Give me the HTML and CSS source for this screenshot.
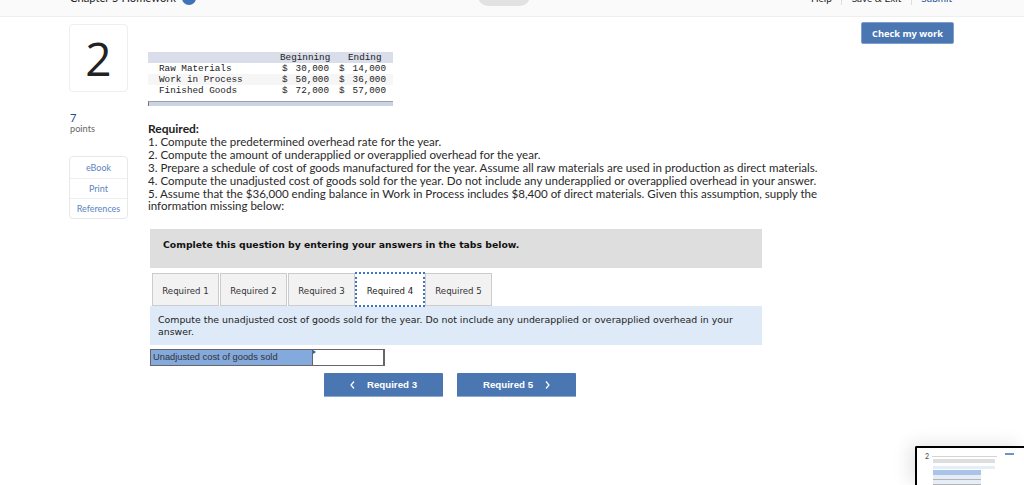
FILE: index.html
```html
<!DOCTYPE html>
<html lang="en">
<head>
<meta charset="utf-8">
<title>Chapter 5 Homework</title>
<link rel="stylesheet" href="styles.css">
</head>
<body>
<header class="topbar">
  <div class="title"><span class="title-text">Chapter 5 Homework</span><span class="info-dot"></span></div>
  <div class="pill"></div>
  <nav class="top-links">
    <span class="top-link">Help</span>
    <span class="top-link">Save &amp; Exit</span>
    <span class="top-link submit">Submit</span>
  </nav>
</header>
<div class="page">
  <aside class="side">
    <div class="qnum">2</div>
    <div class="pts-val">7</div>
    <div class="pts-label">points</div>
    <div class="res">
      <div class="res-item">eBook</div>
      <div class="res-item">Print</div>
      <div class="res-item">References</div>
    </div>
  </aside>
  <main class="main">
    <div class="ledger">
      <div class="lrow lhead"><span class="lname"></span><span class="lbeg">Beginning</span><span class="lend">Ending</span></div>
      <div class="lrow lvals"><span class="lname">Raw Materials</span><span class="lbeg">$ 30,000</span><span class="lend">$ 14,000</span></div>
      <div class="lrow lvals lalt"><span class="lname">Work in Process</span><span class="lbeg">$ 50,000</span><span class="lend">$ 36,000</span></div>
      <div class="lrow lvals"><span class="lname">Finished Goods</span><span class="lbeg">$ 72,000</span><span class="lend">$ 57,000</span></div>
      <div class="lfoot"></div>
    </div>
    <div class="problem">
      <strong>Required:</strong><br>
      1. Compute the predetermined overhead rate for the year.<br>
      2. Compute the amount of underapplied or overapplied overhead for the year.<br>
      3. Prepare a schedule of cost of goods manufactured for the year. Assume all raw materials are used in production as direct materials.<br>
      4. Compute the unadjusted cost of goods sold for the year. Do not include any underapplied or overapplied overhead in your answer.<br>
      5. Assume that the $36,000 ending balance in Work in Process includes $8,400 of direct materials. Given this assumption, supply the information missing below:
    </div>
    <div class="notice">Complete this question by entering your answers in the tabs below.</div>
    <div class="tabs">
      <div class="tab">Required 1</div>
      <div class="tab">Required 2</div>
      <div class="tab">Required 3</div>
      <div class="tab active">Required 4</div>
      <div class="tab">Required 5</div>
    </div>
    <div class="desc">Compute the unadjusted cost of goods sold for the year. Do not include any underapplied or overapplied overhead in your answer.</div>
    <div class="answer">
      <div class="answer-label">Unadjusted cost of goods sold</div>
      <div class="answer-input"><span class="marker"></span></div>
    </div>
    <div class="nav">
      <div class="btn"><svg class="chev" viewBox="0 0 5 8" width="5" height="8"><polyline points="4,0.5 1,4 4,7.5"/></svg>Required 3</div>
      <div class="btn">Required 5<svg class="chev" viewBox="0 0 5 8" width="5" height="8"><polyline points="1,0.5 4,4 1,7.5"/></svg></div>
    </div>
  </main>
  <div class="actions"><div class="check">Check my work</div></div>
</div>
<div class="thumb">
  <div class="t-top"><span class="t-two">2</span><span class="t-line"></span><span class="t-btn"></span></div>
  <div class="t-gray"></div>
  <div class="t-blue"></div>
  <div class="t-table"><div class="t-thead"></div><div class="t-row"></div><div class="t-row"></div></div>
</div>
</body>
</html>
```
FILE: styles.css
```css
* { box-sizing: border-box; }
html, body { margin: 0; padding: 0; height: 485px; overflow: hidden; background: #fff; }
body { font-family: "Lato", "Open Sans", sans-serif; color: #333; position: relative; }

.topbar { height: 17px; background: #fafafa; border-bottom: 1px solid #efefef; overflow: hidden; display: flex; align-items: flex-end; padding: 0 72px 0 70px; }
.title { width: 408px; display: flex; align-items: center; gap: 6px; margin-bottom: 11px; font-size: 11.2px; line-height: 14px; color: #222; }
.info-dot { width: 14px; height: 14px; border-radius: 50%; background: #3f72b6; display: block; }
.pill { width: 52px; height: 20px; background: #e2e2e2; border-radius: 10px; margin-bottom: 10px; }
.top-links { margin-left: auto; display: flex; margin-bottom: 11px; font-size: 10px; line-height: 14px; color: #222; }
.top-link { padding: 0 9.5px; border-left: 1px solid #ddd; }
.top-link:first-child { border-left: 0; }
.submit { color: #1d4f91; padding-right: 0; }

.page { display: grid; grid-template-columns: 59px 693px 93px; column-gap: 20px; padding: 5px 0 0 69px; }

.side { display: flex; flex-direction: column; padding-top: 2px; }
.qnum { height: 68px; border: 1px solid #efefef; border-radius: 4px; display: flex; align-items: center; justify-content: center; font-family: "Open Sans", sans-serif; font-size: 46px; color: #222; line-height: 1; }
.pts-val { margin: 19px 0 0 1px; font-size: 11px; line-height: 13px; color: #1d4f91; }
.pts-label { margin-left: 1px; font-size: 9.2px; line-height: 10px; color: #666; }
.res { margin-top: 22px; border: 1px solid #e8e8e8; border-radius: 4px; height: 63px; display: flex; flex-direction: column; font-size: 9px; color: #5b85bd; }
.res-item { flex: 1; padding-top: 1px; display: flex; align-items: center; justify-content: center; border-top: 1px solid #eee; }
.res-item:first-child { border-top: 0; flex: 1.1; }

.main { padding-top: 30px; }
.ledger { width: 245px; font-family: "Liberation Mono", monospace; font-size: 9.3px; line-height: 11px; color: #222; }
.lrow { display: flex; height: 11px; white-space: pre; }
.lhead { background: #d9deea; }
.lalt { background: #f6f6f6; }
.lname { width: 132px; padding-left: 11px; }
.lbeg { width: 68px; }
.lend { width: 45px; }
.lvals .lname { width: 134px; }
.lvals .lbeg { width: 57px; }
.lvals .lend { width: 54px; }
.lvals .lbeg, .lvals .lend { word-spacing: 2.4px; }
.lfoot { margin-top: 5px; height: 5px; background: #cdd4e1; border-top: 1px solid #9aa2b2; border-left: 1px solid #777; }

.problem { margin-top: 17px; width: 675px; font-size: 11.55px; line-height: 12.9px; color: #2a2a2a; }
.problem strong { font-weight: 700; font-size: 12px; color: #222; }

.notice { margin: 16px 0 0 2px; width: 612px; height: 39px; background: #dedede; padding: 9px 13px; font-family: "DejaVu Sans", sans-serif; font-weight: 700; font-size: 9.3px; line-height: 13px; color: #111; }

.tabs { display: flex; gap: 1px; margin: 5px 0 0 4px; height: 33px; }
.tab { width: 67px; padding-top: 3px; background: #f2f2f2; border: 1px solid #ccc; display: flex; align-items: center; justify-content: center; font-family: "DejaVu Sans", sans-serif; font-size: 8.6px; color: #333; }
.tab.active { width: 70px; height: 35px; margin: -1px -1px 0; background: #fff; border: 2px dotted #3f74c4; color: #222; }

.desc { margin-left: 2px; width: 612px; height: 39px; background: #deeaf7; padding: 8px 8px; font-family: "DejaVu Sans", sans-serif; font-size: 9.4px; line-height: 12px; color: #222; }

.answer { display: flex; margin: 4px 0 0 2px; width: 235px; height: 17px; border: 1px solid #666; border-right-width: 2px; border-bottom-width: 1px; }
.answer-label { width: 162px; background: #83a9dd; border-right: 1px solid #666; font-family: "Liberation Sans", sans-serif; font-size: 9.3px; line-height: 15px; padding-left: 2px; color: #333; }
.answer-input { flex: 1; background: #fff; position: relative; }
.marker { position: absolute; left: 0; top: 0; border-left: 3px solid #2b5fb0; border-top: 2px solid transparent; border-bottom: 2px solid transparent; }

.nav { display: flex; gap: 14px; margin: 7px 0 0 176px; }
.btn { width: 119px; height: 24px; background: #4a76b2; border-radius: 1px; border-bottom: 1px solid #8fabd2; color: #fff; display: flex; align-items: center; justify-content: center; gap: 12px; font-family: "Liberation Sans", sans-serif; font-weight: 700; font-size: 9.7px; }
.chev { fill: none; stroke: #fff; stroke-width: 1.2; }

.check { height: 22px; background: #4a76b2; border: 1px solid #7e9fcc; border-radius: 2px; color: #fff; display: flex; align-items: center; justify-content: center; font-family: "Open Sans", sans-serif; font-weight: 700; font-size: 9.3px; }

.thumb { position: absolute; left: 915px; top: 446px; width: 109px; height: 39px; background: #fff; border: 2px solid #000; border-bottom: 0; border-right: 0; border-radius: 2px 0 0 0; box-shadow: -6px -2px 18px rgba(0,0,0,.1); padding: 5px 10px 0 16px; display: flex; flex-direction: column; overflow: hidden; }
.t-top { display: flex; align-items: center; gap: 3px; height: 6px; margin-left: -8px; }
.t-two { font-size: 7px; line-height: 6px; color: #444; }
.t-line { flex: 1; height: 1px; background: #d4d4d4; margin-right: 5px; }
.t-btn { width: 9px; height: 2px; background: #6f93c6; margin-top: -4px; }
.t-gray { height: 4px; background: #dedede; width: 62px; }
.t-blue { height: 4px; background: #e4eef9; margin-top: 3px; width: 62px; }
.t-table { margin-top: 1px; width: 48px; }
.t-thead { height: 5px; background: #a9c4e8; }
.t-row { height: 5px; background: #e7edf6; border-bottom: 1px solid #b5b5b5; }
```
